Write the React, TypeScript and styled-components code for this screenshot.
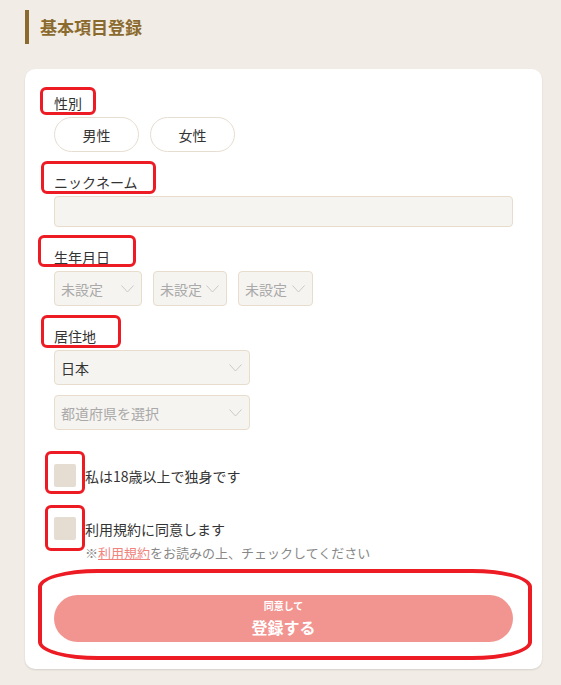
import React from "react";
import styled, { createGlobalStyle } from "styled-components";

const Global = createGlobalStyle`
  html, body { margin: 0; padding: 0; background: #f1ece5; }
  body { font-family: "Noto Sans CJK JP", "Noto Sans", sans-serif; color: #333; }
  * { box-sizing: border-box; }
`;

const Page = styled.div`
  position: relative;
  width: 561px;
  min-height: 685px;
  padding: 10px 19px 16px 25px;
`;

const Heading = styled.h1`
  margin: 0;
  height: 34px;
  line-height: 34px;
  border-left: 4px solid #8b6a2e;
  padding-left: 11px;
  font-size: 17px;
  font-weight: 700;
  color: #8b6a2e;
`;

const Card = styled.div`
  margin-top: 25px;
  background: #fff;
  border-radius: 10px;
  box-shadow: 0 1px 2px rgba(0, 0, 0, 0.12);
  padding: 24px 29px 27px;
  display: flex;
  flex-direction: column;
`;

const Field = styled.div<{ $top?: number }>`
  margin-top: ${(p) => p.$top ?? 0}px;
  display: flex;
  flex-direction: column;
  gap: 4px;
`;

const Label = styled.div`
  font-size: 14px;
  line-height: 20px;
  color: #333;
`;

const Row = styled.div<{ $gap?: number }>`
  display: flex;
  gap: ${(p) => p.$gap ?? 11}px;
`;

const Column = styled.div`
  display: flex;
  flex-direction: column;
  gap: 10px;
`;

const PillButton = styled.button`
  width: 85px;
  height: 35px;
  border: 1px solid #e6ddd1;
  border-radius: 18px;
  background: #fff;
  font-family: inherit;
  font-size: 14px;
  color: #333;
  padding: 0;
`;

const TextInput = styled.div`
  width: 100%;
  height: 31px;
  background: #f6f4f0;
  border: 1px solid #e8dccd;
  border-radius: 4px;
`;

const Select = styled.div<{ $w: number; $muted?: boolean }>`
  position: relative;
  width: ${(p) => p.$w}px;
  height: 35px;
  background: #f6f4f0;
  border: 1px solid #e8dccd;
  border-radius: 4px;
  padding-left: 6px;
  display: flex;
  align-items: center;
  font-size: 14px;
  color: ${(p) => (p.$muted ? "#a9a9a9" : "#333")};
`;

const ChevronWrap = styled.span`
  position: absolute;
  right: 7px;
  top: 50%;
  transform: translateY(-50%);
  display: flex;
`;

const Chevron = () => (
  <ChevronWrap>
    <svg width="13" height="8" viewBox="0 0 13 8">
      <path d="M0.5 0.5 L6.5 7 L12.5 0.5" fill="none" stroke="#c9c9c9" strokeWidth="1" />
    </svg>
  </ChevronWrap>
);

const CheckRow = styled.div<{ $top: number }>`
  margin-top: ${(p) => p.$top}px;
  display: flex;
  align-items: center;
  gap: 9px;
  font-size: 14px;
  line-height: 20px;
  color: #333;
`;

const Box = styled.span`
  width: 22px;
  height: 23px;
  background: #e5ddd2;
  border-radius: 2px;
  flex-shrink: 0;
`;

const Note = styled.div`
  margin-top: 4px;
  padding-left: 31px;
  font-size: 13px;
  line-height: 18px;
  color: #888;
`;

const TermsLink = styled.span`
  color: #f0837d;
  text-decoration: underline;
`;

const Submit = styled.button`
  margin-top: 33px;
  width: 100%;
  height: 47px;
  border: none;
  border-radius: 24px;
  background: #f29591;
  color: #fff;
  font-family: inherit;
  display: flex;
  flex-direction: column;
  align-items: center;
  justify-content: center;
  padding: 0;
`;

const SubSmall = styled.span`
  display: block;
  font-size: 10px;
  line-height: 12px;
  font-weight: 700;
`;

const SubBig = styled.span`
  display: block;
  margin-top: 5px;
  font-size: 16px;
  line-height: 20px;
  font-weight: 700;
`;

const Mark = styled.div<{ $x: number; $y: number; $w: number; $h: number; $oval?: boolean }>`
  position: absolute;
  left: ${(p) => p.$x}px;
  top: ${(p) => p.$y}px;
  width: ${(p) => p.$w}px;
  height: ${(p) => p.$h}px;
  border: ${(p) => (p.$oval ? 4 : 3)}px solid #ed1c24;
  border-radius: ${(p) => (p.$oval ? "60px / 18px" : "6px")};
  pointer-events: none;
`;

export default function App() {
  return (
    <>
      <Global />
      <Page>
        <Heading>基本項目登録</Heading>
        <Card>
          <Field>
            <Label>性別</Label>
            <Row>
              <PillButton>男性</PillButton>
              <PillButton>女性</PillButton>
            </Row>
          </Field>
          <Field $top={20}>
            <Label>ニックネーム</Label>
            <TextInput />
          </Field>
          <Field $top={20}>
            <Label>生年月日</Label>
            <Row>
              <Select $w={88} $muted>
                未設定
                <Chevron />
              </Select>
              <Select $w={74} $muted>
                未設定
                <Chevron />
              </Select>
              <Select $w={75} $muted>
                未設定
                <Chevron />
              </Select>
            </Row>
          </Field>
          <Field $top={20}>
            <Label>居住地</Label>
            <Column>
              <Select $w={196}>
                日本
                <Chevron />
              </Select>
              <Select $w={196} $muted>
                都道府県を選択
                <Chevron />
              </Select>
            </Column>
          </Field>
          <CheckRow $top={34}>
            <Box />
            <span>私は18歳以上で独身です</span>
          </CheckRow>
          <CheckRow $top={30}>
            <Box />
            <span>利用規約に同意します</span>
          </CheckRow>
          <Note>
            ※<TermsLink>利用規約</TermsLink>をお読みの上、チェックしてください
          </Note>
          <Submit>
            <SubSmall>同意して</SubSmall>
            <SubBig>登録する</SubBig>
          </Submit>
        </Card>
        <Mark $x={40} $y={87} $w={56} $h={28} />
        <Mark $x={41} $y={161} $w={115} $h={33} />
        <Mark $x={38} $y={235} $w={98} $h={32} />
        <Mark $x={41} $y={315} $w={80} $h={33} />
        <Mark $x={45} $y={451} $w={40} $h={43} />
        <Mark $x={45} $y={505} $w={40} $h={46} />
        <Mark $x={38} $y={569} $w={494} $h={91} $oval />
      </Page>
    </>
  );
}
